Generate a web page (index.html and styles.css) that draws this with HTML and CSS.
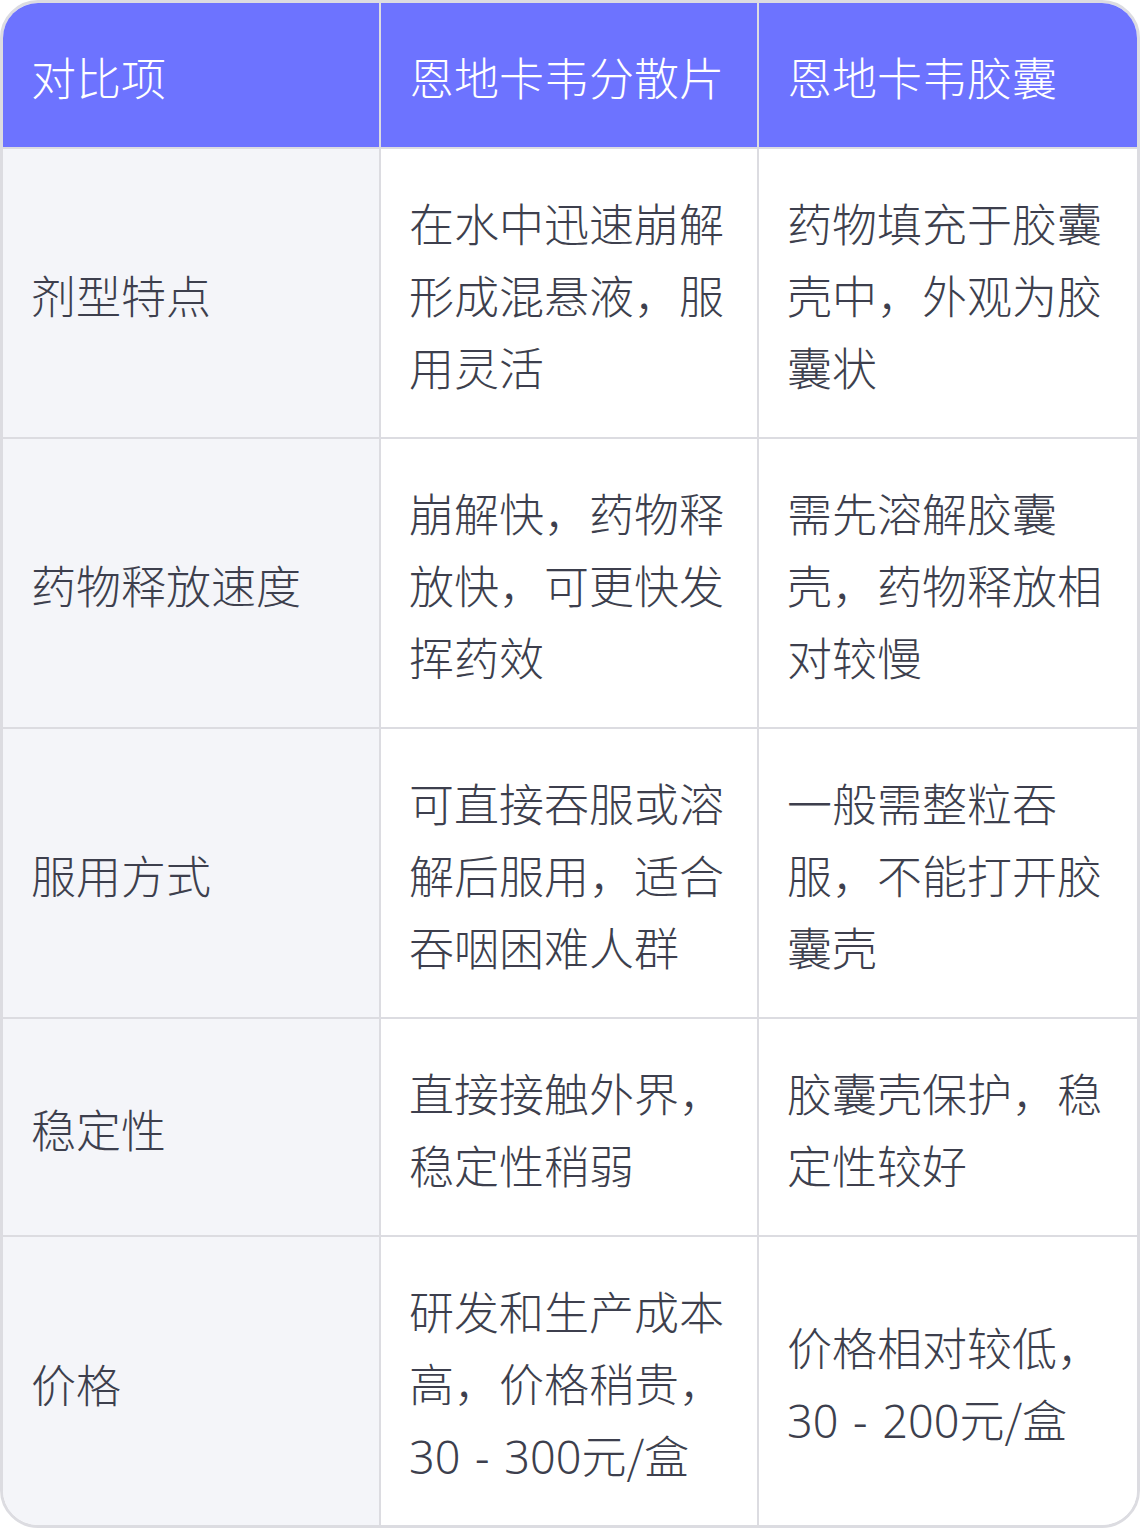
FILE: index.html
```html
<!DOCTYPE html>
<html lang="zh-CN">
<head>
<meta charset="utf-8">
<link rel="stylesheet" href="styles.css">
</head>
<body>
<div class="wrap">
<table class="cmp">
<thead>
<tr><th>对比项</th><th>恩地卡韦分散片</th><th>恩地卡韦胶囊</th></tr>
</thead>
<tbody>
<tr><td>剂型特点</td><td>在水中迅速崩解形成混悬液，服用灵活</td><td>药物填充于胶囊壳中，外观为胶囊状</td></tr>
<tr><td>药物释放速度</td><td>崩解快，药物释放快，可更快发挥药效</td><td>需先溶解胶囊壳，药物释放相对较慢</td></tr>
<tr><td>服用方式</td><td>可直接吞服或溶解后服用，适合吞咽困难人群</td><td>一般需整粒吞服，不能打开胶囊壳</td></tr>
<tr><td>稳定性</td><td>直接接触外界，稳定性稍弱</td><td>胶囊壳保护，稳定性较好</td></tr>
<tr><td>价格</td><td>研发和生产成本高，价格稍贵，<span class="num">30 - 300</span>元/盒</td><td>价格相对较低，<span class="num">30 - 200</span>元/盒</td></tr>
</tbody>
</table>
</div>
</body>
</html>
```
FILE: styles.css
```css
html, body {
  margin: 0;
  padding: 0;
  background: #ffffff;
}
.wrap {
  width: 1140px;
  height: 1528px;
  box-sizing: border-box;
  border: 3px solid #dcdce1;
  border-radius: 38px;
  overflow: hidden;
}
.cmp {
  border-collapse: separate;
  border-spacing: 0;
  width: 100%;
  table-layout: fixed;
  font-family: "Noto Sans CJK SC", "Noto Sans", sans-serif;
  font-weight: 300;
  font-size: 45px;
  line-height: 72px;
  color: #3d3f4d;
}
.cmp th, .cmp td {
  padding: 38px 28px 34px;
  text-align: left;
  vertical-align: middle;
  border-right: 2px solid #dcdce1;
  border-bottom: 2px solid #dcdce1;
  word-break: break-all;
}
.cmp th:first-child, .cmp td:first-child { width: 320px; }
.cmp th:last-child, .cmp td:last-child { border-right: none; }
.cmp tbody tr:last-child td { border-bottom: none; }
.cmp th {
  background: #6d73ff;
  color: #ffffff;
  font-weight: 300;
}
.cmp td:first-child {
  background: #f4f5f9;
}
.cmp td {
  background: #ffffff;
}
.num {
  font-family: "Noto Sans", "Open Sans", sans-serif;
  font-weight: 300;
  word-spacing: 3px;
}
```
